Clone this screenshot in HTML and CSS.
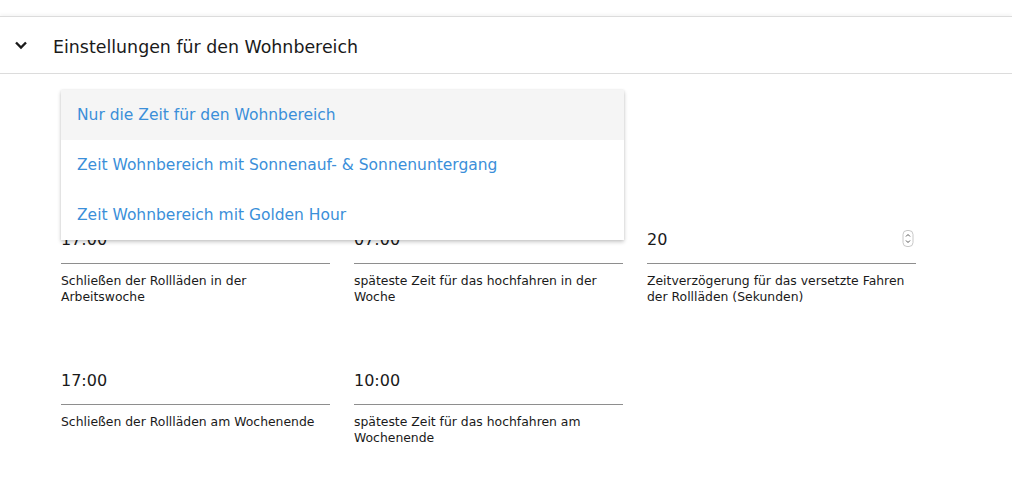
FILE: index.html
```html
<!DOCTYPE html>
<html>
<head>
  <meta charset="UTF-8">
  <link rel="stylesheet" href="styles.css">
</head>
<body>
  <div class="panel">
    <div class="panel-header">
      <svg class="chevron" width="14" height="10" viewBox="0 0 14 10">
        <path d="M2 2.5 L7 7.5 L12 2.5" fill="none" stroke="#1a1a1a" stroke-width="2.4"/>
      </svg>
      <span class="panel-title">Einstellungen für den Wohnbereich</span>
    </div>

    <div class="panel-body">
      <div class="fields">
        <div class="field">
          <div class="value">17:00</div>
          <div class="label">Schließen der Rollläden in der Arbeitswoche</div>
        </div>
        <div class="field">
          <div class="value">07:00</div>
          <div class="label">späteste Zeit für das hochfahren in der Woche</div>
        </div>
        <div class="field">
          <div class="value number">
            <span>20</span>
            <svg class="spinner" width="12" height="17" viewBox="0 0 12 17">
              <rect x="1" y="0.5" width="10" height="16" rx="4" fill="#fff" stroke="#c8c8c8"/>
              <path d="M4 6.5 L6 4.5 L8 6.5 M4 10.5 L6 12.5 L8 10.5" fill="none" stroke="#555" stroke-width="1"/>
            </svg>
          </div>
          <div class="label">Zeitverzögerung für das versetzte Fahren der Rollläden (Sekunden)</div>
        </div>
        <div class="field">
          <div class="value">17:00</div>
          <div class="label">Schließen der Rollläden am Wochenende</div>
        </div>
        <div class="field">
          <div class="value">10:00</div>
          <div class="label">späteste Zeit für das hochfahren am Wochenende</div>
        </div>
      </div>

      <ul class="menu">
        <li class="menu-item active">Nur die Zeit für den Wohnbereich</li>
        <li class="menu-item">Zeit Wohnbereich mit Sonnenauf- &amp; Sonnenuntergang</li>
        <li class="menu-item">Zeit Wohnbereich mit Golden Hour</li>
      </ul>
    </div>
  </div>
</body>
</html>
```

FILE: styles.css
```css
body {
  margin: 0;
  background: #fff;
  font-family: "DejaVu Sans", sans-serif;
  color: #1a1a1a;
}

.panel {
  margin-top: 16px;
  border-top: 1px solid #dcdcdc;
  box-shadow: 0 -2px 3px rgba(0, 0, 0, 0.04);
}

.panel-header {
  height: 56px;
  display: flex;
  align-items: center;
  border-bottom: 1px solid #dcdcdc;
}

.chevron {
  margin-left: 14px;
  margin-right: 25px;
}

.panel-title {
  font-size: 17.4px;
  padding-top: 3px;
}

.panel-body {
  position: relative;
  padding: 153px 0 0 61px;
}

.fields {
  display: grid;
  grid-template-columns: repeat(3, 269px);
  column-gap: 24px;
  row-gap: 63px;
}

.value {
  height: 24px;
  line-height: 25px;
  font-size: 16px;
  padding-bottom: 12px;
  border-bottom: 1px solid #8e8e8e;
}

.value.number {
  display: flex;
  justify-content: space-between;
  align-items: center;
}

.spinner {
  margin-right: 2px;
  margin-top: -1px;
}

.label {
  margin-top: 9px;
  font-size: 12.4px;
  line-height: 16px;
  height: 32px;
}

/* dropdown for the schedule mode */
.menu {
  position: absolute;
  top: 16px;
  left: 61px;
  width: 563px;
  margin: 0;
  padding: 0;
  list-style: none;
  background: #fff;
  box-shadow: 0 2px 4px rgba(0, 0, 0, 0.22), 0 0 2px rgba(0, 0, 0, 0.08);
}

.menu-item {
  height: 50px;
  line-height: 51px;
  padding-left: 16px;
  font-size: 15.5px;
  color: #3b8fd9;
}

.menu-item.active {
  background: #f5f5f5;
}
```
